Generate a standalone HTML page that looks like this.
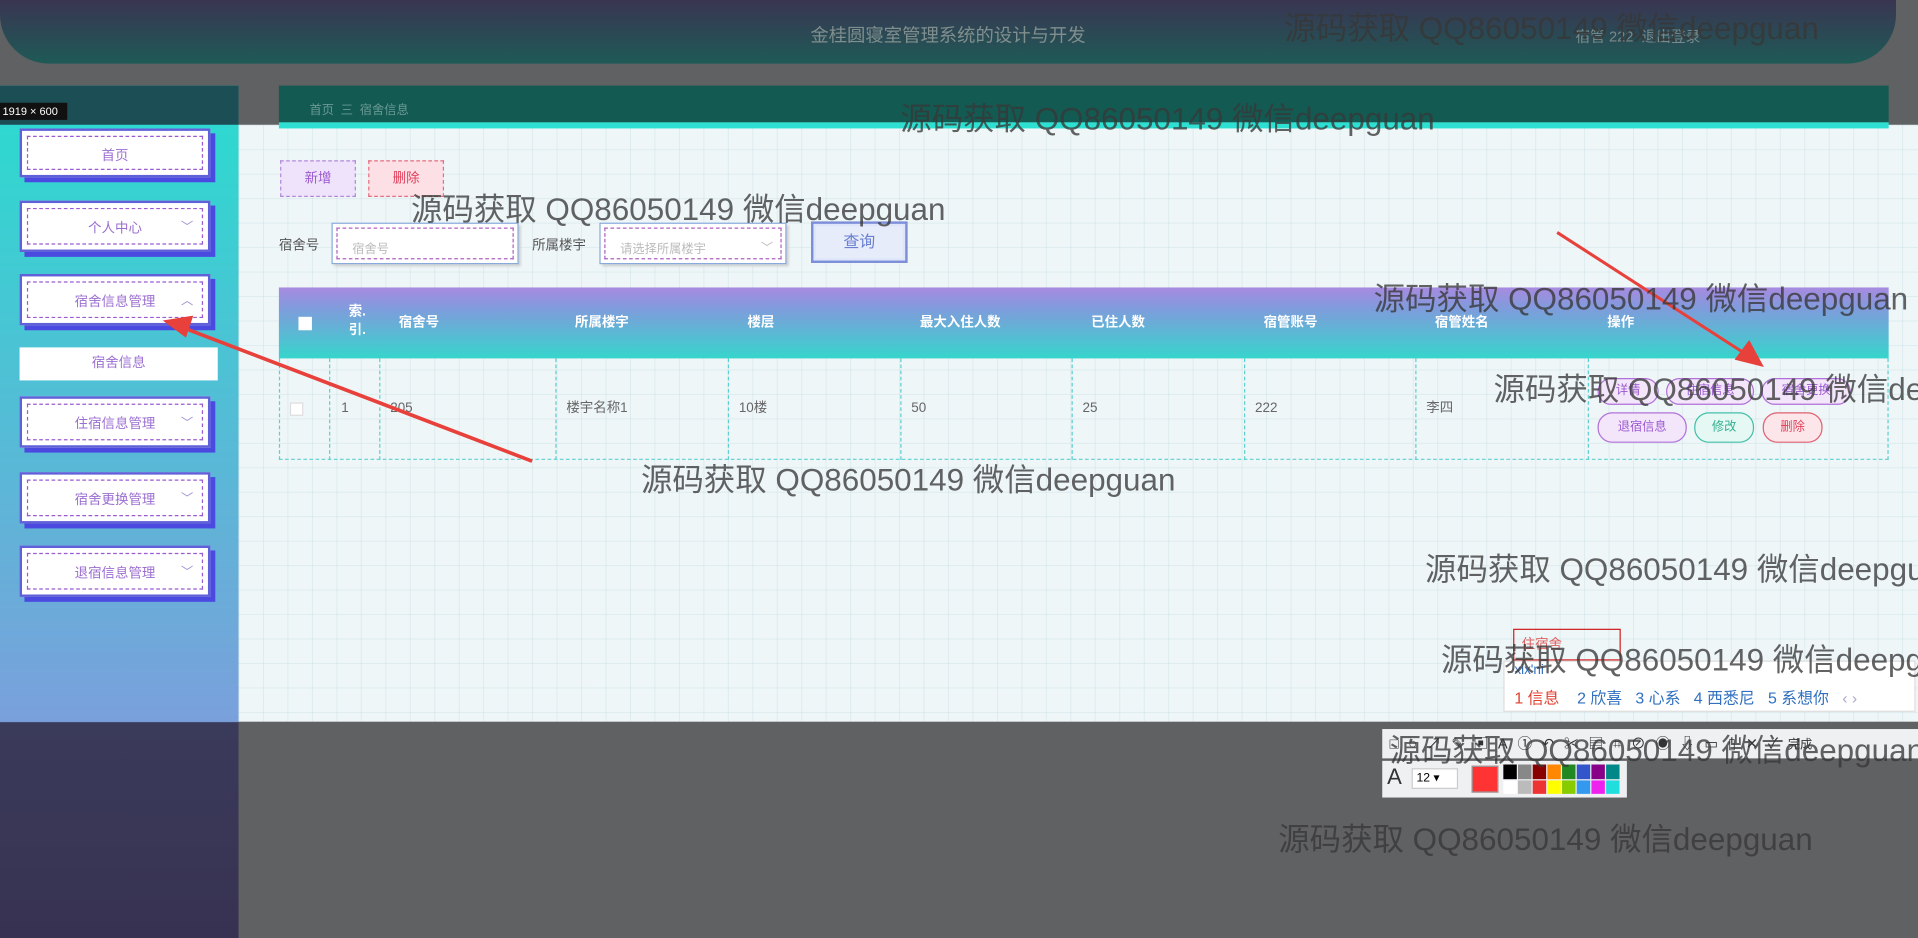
<!DOCTYPE html>
<html><head><meta charset="utf-8"><style>
*{margin:0;padding:0;box-sizing:border-box}
html,body{width:1918px;height:938px;overflow:hidden;background:#5f6163}
body{font-family:"Liberation Sans","Noto Sans CJK SC",sans-serif}
#w{position:absolute;left:0;top:0;width:1568px;height:767px;transform:scale(1.22322);transform-origin:0 0;background:#5f6163}
.a{position:absolute}
.hdr{left:0;top:0;width:1550px;height:52px;border-radius:0 0 40px 40px;background:linear-gradient(#3a3552,#1e5a56)}
.band{left:195px;top:102px;width:1373px;height:488px;background-color:#eef6f8;background-image:linear-gradient(rgba(150,190,200,.18) 1px,transparent 1px),linear-gradient(90deg,rgba(150,190,200,.18) 1px,transparent 1px);background-size:20px 20px}
.side{left:0;top:70px;width:195px;height:697px;background:linear-gradient(#2fd8d0 5%,#7aa0dc 74.6%,#3a3a5a 74.7%,#383252)}
.mi{position:absolute;left:16px;width:156px;height:42px;background:#fff;border:2px solid #6060d8;box-shadow:4px 4px 0 #4a4ae0}
.mi::before{content:"";position:absolute;left:4px;top:4px;right:4px;bottom:4px;border:1px dashed #9b5ad0}
.mi span{position:absolute;left:0;right:0;top:12px;text-align:center;font-size:11px;color:#9b6fd0}
.mi i{position:absolute;right:12px;top:11px;font-style:normal;font-size:10px;color:#9b8fd0}
.wm{position:absolute;font-size:25.7px;color:rgba(55,55,55,.78);white-space:nowrap;font-family:"Liberation Sans","Noto Sans CJK SC",sans-serif}
.th{position:absolute;top:0;height:58px;color:#fff;font-size:11px;font-weight:bold;line-height:58px;padding-left:16px}
.td{position:absolute;top:58px;height:83px;border-left:1px dashed #5ecfd0;font-size:11px;color:#666;line-height:83px;padding-left:8px}
.pb{position:absolute;height:22px;border-radius:12px;font-size:10px;text-align:center;line-height:20px;border:1px solid #b070d8;background:#f3e6fb;color:#9b59d0}
</style></head><body><div id="w">
<div class="a hdr"></div>
<div class="a" style="left:0;top:18px;width:1550px;text-align:center;font-size:15px;color:#808e8e">金桂圆寝室管理系统的设计与开发</div>
<div class="a" style="left:1288px;top:21px;font-size:12px;color:#7a8a8a">宿管 222 &nbsp;退出登录</div>
<div class="a side"></div>
<div class="a" style="left:0;top:70px;width:195px;height:32px;background:#1c4f55"></div>
<div class="a band"></div>
<div class="a" style="left:228px;top:70px;width:1316px;height:30px;background:#135a52"></div>
<div class="a" style="left:228px;top:100px;width:1316px;height:5px;background:#2ee0d2"></div>
<div class="a" style="left:253px;top:81px;font-size:10px;color:#6a9a95">首页 &nbsp;三 &nbsp;宿舍信息</div>
<div class="a" style="left:0;top:84px;width:55px;height:14px;background:#111;color:#fff;font-size:9px;line-height:14px;padding-left:2px">1919 × 600</div>
<div class="mi" style="top:105px;height:40px"><span>首页</span></div>
<div class="mi" style="top:164px"><span>个人中心</span><i>﹀</i></div>
<div class="mi" style="top:224px"><span>宿舍信息管理</span><i>︿</i></div>
<div class="a" style="left:16px;top:284px;width:162px;height:27px;background:#fff;text-align:center;font-size:11px;line-height:27px;color:#9b6fd0">宿舍信息</div>
<div class="mi" style="top:324px"><span>住宿信息管理</span><i>﹀</i></div>
<div class="mi" style="top:386px"><span>宿舍更换管理</span><i>﹀</i></div>
<div class="mi" style="top:446px"><span>退宿信息管理</span><i>﹀</i></div>
<div class="a" style="left:229px;top:131px;width:62px;height:30px;background:#efe3fb;border:1px dashed #b08ad8;color:#9b59d0;font-size:11px;text-align:center;line-height:28px">新增</div>
<div class="a" style="left:301px;top:131px;width:62px;height:30px;background:#fde0e6;border:1px dashed #e07080;color:#e0405a;font-size:11px;text-align:center;line-height:28px">删除</div>
<div class="a" style="left:228px;top:192px;font-size:11px;color:#555">宿舍号</div>
<div class="a" style="left:271px;top:182px;width:153px;height:34px;background:#fff;border:1px solid #8ad;box-shadow:2px 2px 2px #ccc"><div class="a" style="left:3px;top:3px;right:3px;bottom:3px;border:1px dashed #b060c0;font-size:10px;color:#bbb;padding:8px 12px">宿舍号</div></div>
<div class="a" style="left:435px;top:192px;font-size:11px;color:#555">所属楼宇</div>
<div class="a" style="left:490px;top:182px;width:153px;height:34px;background:#fff;border:1px solid #8ad;box-shadow:2px 2px 2px #ccc"><div class="a" style="left:3px;top:3px;right:3px;bottom:3px;border:1px dashed #b060c0;font-size:10px;color:#bbb;padding:8px 12px">请选择所属楼宇<span style="position:absolute;right:6px;top:7px">﹀</span></div></div>
<div class="a" style="left:663px;top:181px;width:79px;height:34px;background:#e6ecfa;border:2px solid #7d8fd8;box-shadow:inset 0 0 0 2px #dfe6fa;color:#6a7fd0;font-size:13px;text-align:center;line-height:30px">查询</div>
<div class="a" style="left:228px;top:235px;width:1316px;height:141px">
<div class="a" style="left:0;top:0;width:1316px;height:58px;background:linear-gradient(#a88ae0,#7f9cdc 30%,#36d5cc)"></div>
<div class="a" style="left:0;top:58px;width:1316px;height:83px;border:1px dashed #5ecfd0;border-top:none"></div>
<div class="th" style="left:0"><span style="display:inline-block;width:11px;height:11px;background:#fff;vertical-align:middle"></span></div>
<div class="th" style="left:41px;line-height:15px;padding-top:13px">索.<br>引.</div>
<div class="th" style="left:82px">宿舍号</div><div class="th" style="left:226px">所属楼宇</div><div class="th" style="left:367px">楼层</div><div class="th" style="left:508px">最大入住人数</div><div class="th" style="left:648px">已住人数</div><div class="th" style="left:789px">宿管账号</div><div class="th" style="left:929px">宿管姓名</div><div class="th" style="left:1070px">操作</div>
<div class="td" style="left:0;border:none;padding-left:9px"><span style="display:inline-block;width:11px;height:11px;background:#fff;border:1px solid #ddd;vertical-align:middle"></span></div>
<div class="td" style="left:41px;padding-left:9px">1</div><div class="td" style="left:82px">205</div><div class="td" style="left:226px">楼宇名称1</div><div class="td" style="left:367px">10楼</div><div class="td" style="left:508px">50</div><div class="td" style="left:648px">25</div><div class="td" style="left:789px">222</div><div class="td" style="left:929px">李四</div><div class="td" style="left:1070px;width:1px"></div>
</div>
<div class="pb" style="left:1306px;top:309px;width:50px">详情</div>
<div class="pb" style="left:1362px;top:309px;width:72px">住宿信息</div>
<div class="pb" style="left:1440px;top:309px;width:73px">宿舍更换</div>
<div class="pb" style="left:1306px;top:337px;width:73px;height:25px;line-height:23px">退宿信息</div>
<div class="pb" style="left:1385px;top:337px;width:49px;height:25px;line-height:23px;border-color:#40c0a8;background:#e6f8f4;color:#30b090">修改</div>
<div class="pb" style="left:1441px;top:337px;width:49px;height:25px;line-height:23px;border-color:#e06070;background:#fde6ea;color:#e0405a">删除</div>
<svg class="a" style="left:0;top:0" width="1568" height="767">
<line x1="435" y1="377" x2="150" y2="268" stroke="#e8403a" stroke-width="3"/>
<polygon points="133,262 158,258 152,276" fill="#e8403a"/>
<line x1="1273" y1="190" x2="1428" y2="290" stroke="#e8403a" stroke-width="2.5"/>
<polygon points="1442,300 1418,294 1430,278" fill="#e8403a"/>
</svg>
<div class="a" style="left:1237px;top:514px;width:88px;height:26px;border:1px solid #d02020;color:#e06060;font-size:11px;padding:3px 6px">住宿舍</div>
<div class="a" style="left:1229px;top:540px;width:337px;height:42px;background:#fff;border:1px solid #ddd">
<div class="a" style="left:8px;top:1px;font-size:11px;color:#3070c0">xix'ni</div>
<div class="a" style="left:8px;top:19px;font-size:13px;color:#3070c0;white-space:nowrap"><span style="color:#e04030">1 信息</span> &nbsp;&nbsp; 2 欣喜 &nbsp; 3 心系 &nbsp; 4 西悉尼 &nbsp; 5 系想你 &nbsp; <span style="color:#aac">‹ ›</span></div></div>
<div class="a" style="left:1130px;top:596px;width:438px;height:24px;background:#eef0f2;font-size:12px;color:#333;line-height:24px;padding-left:6px;letter-spacing:8px;white-space:nowrap;overflow:hidden">□○↗✎▣A①↶✂▤⌗⊘◉⇩▭▯✕✓<span style="font-size:10px;letter-spacing:0">完成</span></div>
<div class="a" style="left:1130px;top:622px;width:200px;height:30px;background:#eef0f2">
<div class="a" style="left:4px;top:3px;font-size:18px;color:#333">A</div>
<div class="a" style="left:24px;top:6px;width:38px;height:17px;background:#fff;border:1px solid #ccc;font-size:10px;padding-left:3px;line-height:15px">12 ▾</div>
<div class="a" style="left:73px;top:4px;width:22px;height:22px;background:#f33;border:1px solid #999"></div>
<div class="a" style="left:99px;top:3px;width:96px;height:24px;display:grid;grid-template-columns:repeat(8,11px);gap:1px 1px">
<i style="background:#000"></i><i style="background:#888"></i><i style="background:#800"></i><i style="background:#f80"></i><i style="background:#282"></i><i style="background:#35c"></i><i style="background:#808"></i><i style="background:#088"></i>
<i style="background:#fff"></i><i style="background:#bbb"></i><i style="background:#e33"></i><i style="background:#ff0"></i><i style="background:#8c0"></i><i style="background:#39e"></i><i style="background:#e2e"></i><i style="background:#2dd"></i></div></div>
<div class="wm" style="left:1050px;top:3px">源码获取 QQ86050149 微信deepguan</div>
<div class="wm" style="left:736px;top:77px">源码获取 QQ86050149 微信deepguan</div>
<div class="wm" style="left:336px;top:151px">源码获取 QQ86050149 微信deepguan</div>
<div class="wm" style="left:1123px;top:224px">源码获取 QQ86050149 微信deepguan</div>
<div class="wm" style="left:1221px;top:298px">源码获取 QQ86050149 微信deepguan</div>
<div class="wm" style="left:524px;top:372px">源码获取 QQ86050149 微信deepguan</div>
<div class="wm" style="left:1165px;top:445px">源码获取 QQ86050149 微信deepguan</div>
<div class="wm" style="left:1178px;top:519px">源码获取 QQ86050149 微信deepguan</div>
<div class="wm" style="left:1136px;top:593px">源码获取 QQ86050149 微信deepguan</div>
<div class="wm" style="left:1045px;top:666px">源码获取 QQ86050149 微信deepguan</div>
</div></body></html>
